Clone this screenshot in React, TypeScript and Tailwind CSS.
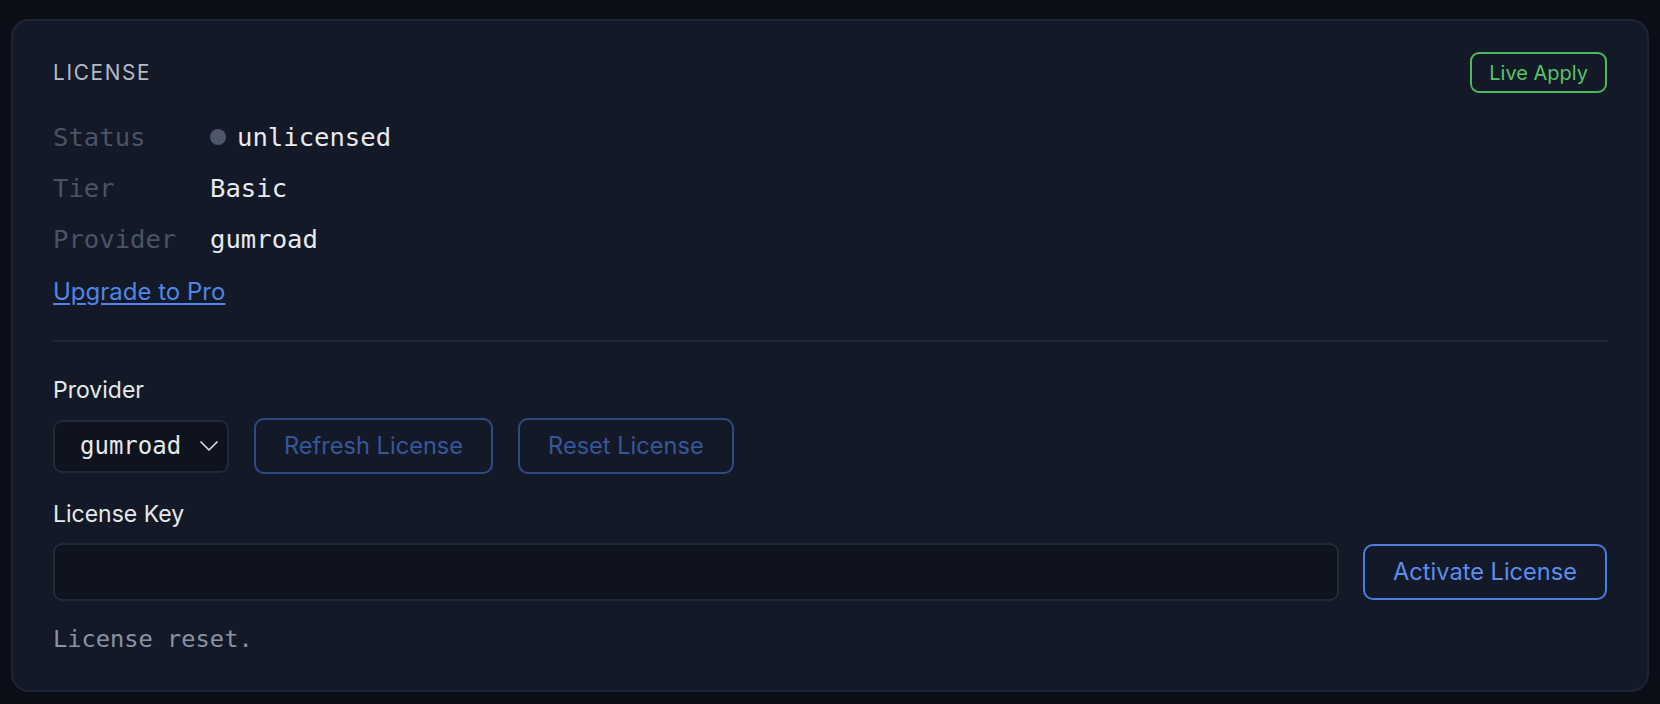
import React from 'react';

const mono = "font-['DejaVu_Sans_Mono',monospace]";

function InfoRow({ label, children }: { label: string; children: React.ReactNode }) {
  return (
    <div className={`flex h-[51px] items-center ${mono} text-[25.6px]`}>
      <span className="w-[157px] shrink-0 text-[#4a5366]">{label}</span>
      <span className="flex items-center text-[#e8eaee]">{children}</span>
    </div>
  );
}

function OutlineButton({ children, bright }: { children: React.ReactNode; bright?: boolean }) {
  return (
    <button
      type="button"
      className={
        bright
          ? 'h-[56px] rounded-[10px] border-2 border-[#4a7fdf] px-[28px] text-[23.6px] text-[#5a8ef0]'
          : 'h-[56px] rounded-[10px] border-2 border-[#2d4c86] px-[28px] text-[23.6px] text-[#36579a]'
      }
    >
      {children}
    </button>
  );
}

export default function App() {
  return (
    <div className="min-h-screen bg-[#0b0e17] px-[11px] pt-[19px] pb-[13px] font-['Inter',sans-serif]">
      <section className="rounded-[18px] border-2 border-[#1d2433] bg-[#131926] px-[40px] pt-[31px] pb-[32px]">
        <header className="flex h-[41px] items-center justify-between">
          <h2 className="text-[20.8px] tracking-[0.08em] text-[#b3bbc9]">LICENSE</h2>
          <span className="flex h-[41px] items-center rounded-[9px] border-2 border-[#4cb961] px-[17px] text-[20px] text-[#58c26b]">
            Live Apply
          </span>
        </header>

        <div className="mt-[19px]">
          <InfoRow label="Status">
            <span className="mr-[11px] inline-block h-[16px] w-[16px] rounded-full bg-[#4d5769]" />
            unlicensed
          </InfoRow>
          <InfoRow label="Tier">Basic</InfoRow>
          <InfoRow label="Provider">gumroad</InfoRow>
        </div>

        <a href="#" className="mt-[9px] block w-fit text-[24px] leading-[36px] text-[#4f86e8] underline underline-offset-[3px]">
          Upgrade to Pro
        </a>

        <div className="mt-[30px] h-[2px] bg-[#1f2636]" />

        <label className="mt-[32px] block text-[23px] leading-[32px] text-[#e6e8ec]">Provider</label>
        <div className="mt-[12px] flex items-center gap-[25px]">
          <div className={`flex h-[53px] w-[176px] items-center justify-between rounded-[9px] border-2 border-[#212838] bg-[#0f131e] pr-[9px] pl-[25px] ${mono} text-[24px] text-[#e6e8ec]`}>
            gumroad
            <svg width="18" height="10" viewBox="0 0 18 10" fill="none" stroke="#d9dce2" strokeWidth="1.7" strokeLinecap="round" strokeLinejoin="round">
              <polyline points="1,1 9,9 17,1" />
            </svg>
          </div>
          <OutlineButton>Refresh License</OutlineButton>
          <OutlineButton>Reset License</OutlineButton>
        </div>

        <label className="mt-[24px] block text-[23px] leading-[32px] text-[#e6e8ec]">License Key</label>
        <div className="mt-[13px] flex items-center gap-[24px]">
          <input
            type="text"
            className="h-[58px] flex-1 rounded-[9px] border-2 border-[#212838] bg-[#0f131e] px-4 text-[22px] text-[#e6e8ec] outline-none"
          />
          <OutlineButton bright>Activate License</OutlineButton>
        </div>

        <p className={`mt-[21px] ${mono} text-[23.7px] text-[#8a93a4]`}>License reset.</p>
      </section>
    </div>
  );
}
